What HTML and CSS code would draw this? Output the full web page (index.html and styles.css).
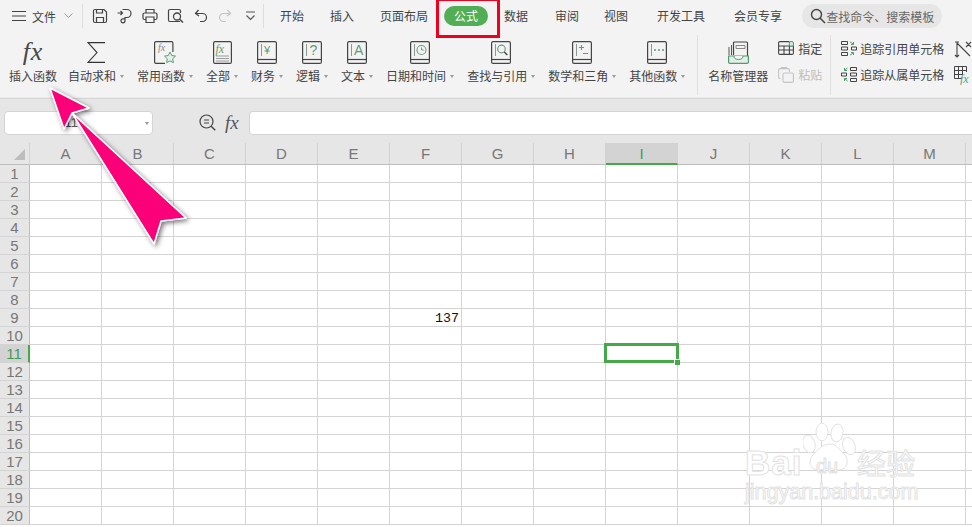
FILE: index.html
```html
<!DOCTYPE html>
<html lang="zh-CN">
<head>
<meta charset="utf-8">
<title>公式</title>
<link rel="stylesheet" href="styles.css">
</head>
<body>
<svg class="defs" width="0" height="0" aria-hidden="true">
  <defs>
    <g id="book">
      <rect x=".6" y=".6" width="18.800" height="21.800" rx="1.500" fill="none" stroke="#444" stroke-width="1.200"/>
      <path d="M1 18.500H19" stroke="#444" stroke-width="1.200"/>
      <path d="M4.500 3v12" stroke="#8a9a92" stroke-width="1"/>
    </g>
  </defs>
</svg>
<div class="app">
  <header class="titlebar">
    <svg class="ico-menu" width="14" height="12" viewBox="0 0 14 12"><path d="M0 1.500h14M0 6h14M0 10.500h14" stroke="#444" stroke-width="1.200"/></svg>
    <span class="file">文件</span>
    <svg class="ico-chev" width="9" height="6" viewBox="0 0 9 6"><path d="M.5.5l4 4 4-4" fill="none" stroke="#999"/></svg>
    <i class="vsep first"></i>
    <div class="quick">
      <svg width="16" height="16" viewBox="0 0 16 16"><path d="M1.500 3a1.500 1.500 0 0 1 1.500-1.500h9L14.500 4v9a1.500 1.500 0 0 1-1.500 1.500H3A1.500 1.500 0 0 1 1.500 13zM4.500 14.500V9.500h7v5M4.500 1.500v3.500h6V1.500" fill="none" stroke="#444" stroke-width="1.200"/></svg>
      <svg width="16" height="16" viewBox="0 0 16 16"><path d="M.5 5h5M3.500 3l2 2-2 2M5.500 1.500h4.500a4 4 0 0 1 0 8H8v3.300a2 2 0 1 1-2-2h2" fill="none" stroke="#444" stroke-width="1.200"/></svg>
      <svg width="16" height="16" viewBox="0 0 16 16"><path d="M4 5V1.500h8V5M4 11.500H2.500a1.500 1.500 0 0 1-1.500-1.500V6.500A1.500 1.500 0 0 1 2.500 5h11A1.500 1.500 0 0 1 15 6.500V10a1.500 1.500 0 0 1-1.500 1.500H12M4 9h8v5.500H4z" fill="none" stroke="#444" stroke-width="1.200"/></svg>
      <svg width="17" height="16" viewBox="0 0 17 16"><path d="M13 13.500H3A1.500 1.500 0 0 1 1.500 12V3A1.500 1.500 0 0 1 3 1.500h9A1.500 1.500 0 0 1 13.500 3v2" fill="none" stroke="#444" stroke-width="1.200"/><circle cx="10" cy="8.500" r="3.500" fill="none" stroke="#444" stroke-width="1.300"/><path d="M12.500 11l3.500 3.500" stroke="#444" stroke-width="1.500"/></svg>
      <svg width="14" height="14" viewBox="0 0 14 14"><path d="M4.500 1L1.500 4.500l3.500 2.500M1.500 4.500h7a4 4 0 0 1 0 8H6" fill="none" stroke="#444" stroke-width="1.200"/></svg>
      <svg width="14" height="14" viewBox="0 0 14 14"><path d="M9.500 1l3 3.500L9 7M12.500 4.500h-7a4 4 0 0 0 0 8H8" fill="none" stroke="#c4c4c4" stroke-width="1.200"/></svg>
      <svg width="11" height="10" viewBox="0 0 11 10"><path d="M1 1h9M1.500 4.500l4 4 4-4" fill="none" stroke="#555" stroke-width="1.100"/></svg>
    </div>
    <i class="vsep second"></i>
    <nav class="tabs">
      <span class="tab t1">开始</span>
      <span class="tab t2">插入</span>
      <span class="tab t3">页面布局</span>
      <span class="tab active">公式</span>
      <span class="tab t5">数据</span>
      <span class="tab t6">审阅</span>
      <span class="tab t7">视图</span>
      <span class="tab t8">开发工具</span>
      <span class="tab t9">会员专享</span>
    </nav>
    <div class="search">
      <svg width="16" height="16" viewBox="0 0 16 16"><circle cx="6.500" cy="6.500" r="5" fill="none" stroke="#444" stroke-width="1.400"/><path d="M10 10l5 5" stroke="#444" stroke-width="1.500"/></svg>
      <span>查找命令、搜索模板</span>
    </div>
  </header>

  <section class="ribbon">
    <div class="rb first-item">
      <div class="rb-icon"><span class="fx-big">fx</span></div>
      <span class="rb-label">插入函数</span>
    </div>
    <div class="rb">
      <div class="rb-icon"><svg width="18" height="21" viewBox="0 0 18 21"><path d="M18 .6H1l9 10-9 9.800h17" fill="none" stroke="#333" stroke-width="1.100"/></svg></div>
      <span class="rb-label">自动求和<b></b></span>
    </div>
    <div class="rb">
      <div class="rb-icon"><svg width="22" height="23" viewBox="0 0 22 23"><path d="M11 22.400H2a1.400 1.400 0 0 1-1.400-1.400V2A1.400 1.400 0 0 1 2 .6h15.500A1.400 1.400 0 0 1 18.900 2v9" fill="none" stroke="#444" stroke-width="1.200"/><text x="4" y="10" class="small-fx grey">fx</text><path d="M16 11l1.700 3.500 3.800.6-2.800 2.700.7 3.900-3.400-1.800-3.400 1.800.7-3.900-2.800-2.700 3.800-.6z" fill="#e6efe8" stroke="#5d9d78"/></svg></div>
      <span class="rb-label">常用函数<b></b></span>
    </div>
    <div class="rb">
      <div class="rb-icon"><svg width="19" height="23" viewBox="0 0 19 23"><rect x=".6" y=".6" width="17.800" height="21.800" rx="1.500" fill="none" stroke="#444" stroke-width="1.200"/><text x="2.500" y="12" class="mid-fx green">fx</text><path d="M3 15h13M3 17.500h13M3 20h13" stroke="#999"/></svg></div>
      <span class="rb-label">全部<b></b></span>
    </div>
    <div class="rb">
      <div class="rb-icon"><svg width="20" height="23"><use href="#book"/><text x="7" y="13" class="mark green">¥</text></svg></div>
      <span class="rb-label">财务<b></b></span>
    </div>
    <div class="rb">
      <div class="rb-icon"><svg width="20" height="23"><use href="#book"/><text x="7.500" y="14" class="mark big green">?</text></svg></div>
      <span class="rb-label">逻辑<b></b></span>
    </div>
    <div class="rb">
      <div class="rb-icon"><svg width="20" height="23"><use href="#book"/><text x="7" y="14" class="mark big green">A</text></svg></div>
      <span class="rb-label">文本<b></b></span>
    </div>
    <div class="rb">
      <div class="rb-icon"><svg width="20" height="23"><use href="#book"/><circle cx="11.500" cy="9" r="4.500" fill="none" stroke="#6a9f80" stroke-width="1.100"/><path d="M11.500 6.500V9h2.200" fill="none" stroke="#6a9f80"/></svg></div>
      <span class="rb-label">日期和时间<b></b></span>
    </div>
    <div class="rb">
      <div class="rb-icon"><svg width="20" height="23"><use href="#book"/><circle cx="10.500" cy="8" r="3.800" fill="none" stroke="#6a9f80" stroke-width="1.200"/><path d="M13.300 11l3 3" stroke="#444" stroke-width="1.400"/></svg></div>
      <span class="rb-label">查找与引用<b></b></span>
    </div>
    <div class="rb">
      <div class="rb-icon"><svg width="20" height="23"><use href="#book"/><path d="M7 6.500h5M9.500 4v5M11 12.500h5" stroke="#5d9d78" stroke-width="1.100"/></svg></div>
      <span class="rb-label">数学和三角<b></b></span>
    </div>
    <div class="rb">
      <div class="rb-icon"><svg width="20" height="23"><use href="#book"/><path d="M7 9h2M11 9h2M15 9h2" stroke="#5d9d78" stroke-width="1.400"/></svg></div>
      <span class="rb-label">其他函数<b></b></span>
    </div>
    <i class="rsep a"></i>
    <div class="rb name-mgr">
      <div class="rb-icon"><svg width="21" height="23" viewBox="0 0 21 23"><path d="M3.500 14V4M1 14V6" stroke="#555"/><path d="M5.500 14V2a1 1 0 0 1 1-1h12a1 1 0 0 1 1 1v13" fill="none" stroke="#444" stroke-width="1.200"/><path d="M8 4.500h9v3H8z" fill="none" stroke="#888"/><path d="M.6 15h19.800v6a1.400 1.400 0 0 1-1.400 1.400H2A1.400 1.400 0 0 1 .6 21z" fill="#e2efe6" stroke="#4f9a6c" stroke-width="1.200"/><path d="M6 15a4.500 3.500 0 0 0 9 0" fill="#f3f3f3" stroke="#4f9a6c"/></svg></div>
      <span class="rb-label">名称管理器</span>
    </div>
    <div class="rb-col names">
      <div class="row-item">
        <svg width="16" height="15" viewBox="0 0 16 15"><path d="M11.400.6H2A1.400 1.400 0 0 0 .6 2v10A1.400 1.400 0 0 0 2 13.400h12a1.400 1.400 0 0 0 1.400-1.400V5M.6 5H15.400M.6 9H15.400M6 5V13.400M11.400 5V13.400" fill="none" stroke="#444" stroke-width="1.100"/><path d="M11.400.6H14A1.400 1.400 0 0 1 15.400 2V5H11.400z" fill="#dcebe1" stroke="#4f9a6c"/></svg>
        <span>指定</span>
      </div>
      <div class="row-item off">
        <svg width="16" height="16" viewBox="0 0 16 16"><path d="M2.500 11.500H2A1.400 1.400 0 0 1 .6 10V3A1.400 1.400 0 0 1 2 1.600h8A1.400 1.400 0 0 1 11.400 3v2M3.500 1.600V.6h5v1" fill="none" stroke="#c4c4c4" stroke-width="1.100"/><rect x="5" y="6" width="10.400" height="9.400" rx="1.400" fill="none" stroke="#c4c4c4" stroke-width="1.100"/></svg>
        <span>粘贴</span>
      </div>
    </div>
    <i class="rsep b"></i>
    <div class="rb-col trace">
      <div class="row-item">
        <svg width="16" height="15" viewBox="0 0 16 15"><path d="M.5.500h6v3h-6zM.5 6h6v3h-6zM.5 11.500h6v3h-6zM10.500 6h5v3h-5z" fill="none" stroke="#444" stroke-width="1"/><path d="M9 .8l3 2.200M12.500 1v2.500H10M9 14.200l3-2.200M12.500 14v-2.500H10" fill="none" stroke="#4f9a6c"/></svg>
        <span>追踪引用单元格</span>
      </div>
      <div class="row-item">
        <svg width="16" height="15" viewBox="0 0 16 15"><path d="M9.500.500h6v3h-6zM9.500 6h6v3h-6zM9.500 11.500h6v3h-6zM.5 6h5v3h-5z" fill="none" stroke="#444" stroke-width="1"/><path d="M3.500 3.500l3-2.500M3.500 1v2.500H6M3.500 11.500l3 2.500M3.500 14v-2.500H6" fill="none" stroke="#4f9a6c"/></svg>
        <span>追踪从属单元格</span>
      </div>
    </div>
    <div class="rb-col clipped">
      <svg width="18" height="17" viewBox="0 0 18 17"><path d="M3 2l13 13M3 1v15M1 14l2 2 2-2M3 1H1h4M12 1l5 5M17 1l-5 5" fill="none" stroke="#444" stroke-width="1.100"/></svg>
      <svg width="17" height="19" viewBox="0 0 17 19"><path d="M8 12.500H.5V.5h12V6M.5 4.500h12M.5 8.500h8.500M4.500.5v12M8.500.5v8" fill="none" stroke="#444" stroke-width="1"/><text x="6" y="16.500" class="mid-fx green">fx</text></svg>
    </div>
  </section>

  <section class="formula">
    <div class="namebox"><span>I11</span><b></b></div>
    <svg class="ico-zoom" width="17" height="17" viewBox="0 0 17 17"><circle cx="7.500" cy="7.500" r="6.500" fill="none" stroke="#444" stroke-width="1.200"/><path d="M5 6h5M5 9h5" stroke="#444"/><path d="M12.200 12.200l4 4" stroke="#444" stroke-width="1.400"/></svg>
    <span class="fx-small">fx</span>
    <div class="input"></div>
  </section>

  <section class="sheet" id="sheet"></section>
</div>

<div class="selection"><i></i></div>

<div class="watermark" aria-hidden="true">
  <svg class="paw" width="54" height="50" viewBox="0 0 54 50"><g fill="#fff" stroke="#e2e2e2" stroke-width="1"><ellipse cx="6" cy="21" rx="6" ry="9" transform="rotate(-15 6 21)"/><ellipse cx="19" cy="9" rx="6" ry="9"/><ellipse cx="34" cy="10" rx="6" ry="9" transform="rotate(10 34 10)"/><ellipse cx="46" cy="23" rx="6" ry="9" transform="rotate(-20 46 23)"/><path d="M27 21c7 0 9 6 14 10s5 16-6 16c-4 0-5-2-9-2s-5 2-10 2c-10 0-11-10-6-15s9-11 17-11z"/></g></svg>
  <span class="wm-bai">Bai</span>
  <span class="wm-du">du</span>
  <span class="wm-cn">经验</span>
  <span class="wm-url">jingyan.baidu.com</span>
</div>

<svg class="arrow" width="220" height="200" viewBox="0 60 220 200">
  <defs><filter id="sh" x="-20%" y="-20%" width="140%" height="140%"><feDropShadow dx="2" dy="2" stdDeviation="2.500" flood-color="#000" flood-opacity=".55"/></filter></defs>
  <path d="M50 88L89 108 72 113 186 218 161 221 154 244 72 113 64 129z" fill="#fb0079" stroke="#fff" stroke-width="1.500" stroke-linejoin="round" filter="url(#sh)"/>
</svg>

<div class="redbox"></div>

<script src="sheet.js"></script>
</body>
</html>
```
FILE: styles.css
```css
* { box-sizing: border-box; }
html, body { margin: 0; padding: 0; }
body { width: 972px; height: 527px; overflow: hidden; position: relative; background: #fff; font-family: "Noto Sans CJK SC", "Liberation Sans", sans-serif; font-size: 12px; color: #444; }
.defs { position: absolute; }
.app { width: 972px; height: 527px; display: flex; flex-direction: column; overflow: hidden; }

.titlebar { height: 32px; flex: none; background: #f3f3f3; display: flex; align-items: center; padding-left: 12px; white-space: nowrap; }
.file { margin-left: 6px; width: 25px; }
.ico-chev { margin-left: 7px; }
.vsep { display: block; width: 1px; height: 24px; background: #dedede; }
.vsep.first { margin-left: 9px; }
.vsep.second { margin-left: 7px; }
.quick { display: flex; align-items: center; margin-left: 9px; }
.quick svg { margin-right: 9px; }
.quick svg:nth-child(4) { margin-right: 10px; }
.quick svg:nth-child(5) { margin-right: 10px; }
.quick svg:nth-child(6) { margin-right: 13px; }
.quick svg:nth-child(7) { margin-right: 0; }
.tabs { display: flex; align-items: center; margin-left: 16px; }
.tab { display: block; line-height: 20px; }
.t2 { margin-left: 26px; }
.t3 { margin-left: 26px; }
.active { margin-left: 16px; width: 44px; height: 20px; border-radius: 10px; background: #52ae55; color: #fff; text-align: center; }
.t5 { margin-left: 16px; }
.t6 { margin-left: 27px; }
.t7 { margin-left: 25px; }
.t8 { margin-left: 29px; }
.t9 { margin-left: 29px; }
.search { margin-left: 20px; width: 140px; height: 24px; border-radius: 12px; background: #e6e6e6; display: flex; align-items: center; padding-left: 8px; color: #666; }
.search svg { flex: none; }

.ribbon { height: 67px; flex: none; background: #f3f3f3; border-bottom: 1px solid #d6d6d6; display: flex; padding-left: 9px; gap: 13px; box-shadow: inset 0 -1px 0 #ececec; white-space: nowrap; }
.rb { display: flex; flex-direction: column; align-items: center; }
.first-item { margin-right: -2px; }
.rb-icon { height: 24px; margin-top: 8px; display: flex; align-items: center; justify-content: center; }
.rb-label { margin-top: 3px; line-height: 18px; display: flex; align-items: center; }
.rb-label b, .namebox b { width: 0; height: 0; margin-left: 4px; border: 2.500px solid transparent; border-top: 3px solid #999; border-bottom: 0; }
.fx-big { font-family: "Liberation Serif", serif; font-style: italic; font-size: 26px; letter-spacing: 1px; line-height: 24px; color: #484848; }
.small-fx { font: italic 10px "Liberation Serif", serif; }
.mid-fx { font: italic 12px "Liberation Serif", serif; }
.mark { font: 11px "Liberation Sans", sans-serif; }
.mark.big { font-size: 14px; }
.grey { fill: #888; }
.green { fill: #5d9d78; }
.rsep { display: block; width: 1px; height: 60px; margin-top: 3px; background: #e0e0e0; flex: none; }
.rsep.a { margin-left: -1px; }
.name-mgr { margin-left: -3px; width: 60px; margin-right: -3px; }
.rb-col { display: flex; flex-direction: column; gap: 8px; padding-top: 7px; }
.row-item { display: flex; align-items: center; gap: 4px; height: 17px; margin-top: 1px; line-height: 17px; }
.row-item.off { color: #bdbdbd; }
.rsep.b { margin-left: -5px; }
.trace { margin-left: -3px; }
.trace .row-item { gap: 3px; }
.clipped { margin-left: -3px; gap: 8px; padding-top: 9px; }

.formula { height: 44px; flex: none; background: #e6e6e6; display: flex; align-items: center; padding: 3px 0 0 4px; }
.namebox { width: 149px; height: 24px; background: #fff; border: 1px solid #d4d4d4; border-radius: 4px; display: flex; align-items: center; justify-content: center; position: relative; font-family: "Liberation Sans", sans-serif; font-size: 13px; color: #555; padding-right: 18px; }
.namebox b { position: absolute; right: 3px; top: 10px; }
.ico-zoom { margin-left: 46px; flex: none; }
.fx-small { margin-left: 9px; width: 24px; font: italic 19px "Liberation Serif", serif; color: #555; }
.input { flex: 1; height: 24px; background: #fff; border: 1px solid #d4d4d4; border-radius: 4px 0 0 4px; border-right: 0; }

.sheet { flex: 1; display: grid; grid-template-columns: 30px repeat(13, 72px) 18px; grid-template-rows: 22px repeat(20, 18px); overflow: hidden; font-family: "Liberation Sans", sans-serif; font-size: 15px; color: #777; }
.c { border-right: 1px solid #d4d4d4; border-bottom: 1px solid #d4d4d4; background: #fff; min-width: 0; }
.h { background: #e6e6e6; display: flex; align-items: center; justify-content: center; line-height: 17px; border-bottom-color: #bdbdbd; }
.h.col { border-right-color: #d0d0d0; }
.h.row { border-right-color: #bdbdbd; border-bottom-color: #d4d4d4; }
.h.cur { background: #d3d3d3; color: #3f9a5a; }
.h.col.cur { border-bottom: 2px solid #44a946; }
.h.row.cur { border-right: 2px solid #44a946; }
.corner { position: relative; }
.corner::after { content: ""; position: absolute; right: 4px; bottom: 4px; border-style: solid; border-width: 0 0 11px 11px; border-color: transparent transparent #bdbdbd transparent; }
.val { display: flex; align-items: flex-end; justify-content: flex-end; font: 13.300px/14px "Liberation Mono", monospace; color: #111; padding-right: 2px; }

.selection { position: absolute; left: 604px; top: 343px; width: 75px; height: 20px; border: 3px solid #44a946; }
.selection i { position: absolute; right: -4px; bottom: -5px; width: 6px; height: 6px; background: #44a946; border: 1px solid #fff; border-width: 1px 0 0 1px; }

.watermark { position: absolute; left: 745px; top: 422px; width: 175px; height: 84px; }
.paw { position: absolute; left: 58px; top: 1px; }
.watermark span { position: absolute; color: #fff; -webkit-text-stroke: 1px #e2e2e2; line-height: 1; font-family: "Liberation Sans", sans-serif; white-space: nowrap; }
.wm-bai { left: 0; top: 23px; font-size: 35px; font-weight: 700; letter-spacing: 1px; }
.wm-du { left: 71px; top: 34px; font-size: 20px; }
.watermark .wm-cn { left: 112px; top: 26px; font-size: 29px; font-family: "Noto Sans CJK SC", sans-serif; }
.wm-url { left: 0; top: 60px; font-size: 21.500px; }

.arrow { position: absolute; left: 0; top: 60px; pointer-events: none; overflow: visible; }
.redbox { position: absolute; left: 436px; top: -2px; width: 64px; height: 40px; border: 3px solid #f0001e; }
```
FILE: sheet.js
```js
var sheet = document.getElementById('sheet');
var letters = 'ABCDEFGHIJKLMN';
function cell(cls, text) {
  var d = document.createElement('div');
  d.className = 'c ' + cls;
  if (text) d.textContent = text;
  sheet.appendChild(d);
}
cell('h corner', '');
for (var i = 0; i < 14; i++) cell('h col' + (letters[i] === 'I' ? ' cur' : ''), i < 13 ? letters[i] : '');
for (var r = 1; r <= 20; r++) {
  cell('h row' + (r === 11 ? ' cur' : ''), String(r));
  for (var k = 0; k < 14; k++) {
    if (r === 9 && letters[k] === 'F') cell('val', '137');
    else cell('', '');
  }
}
```
